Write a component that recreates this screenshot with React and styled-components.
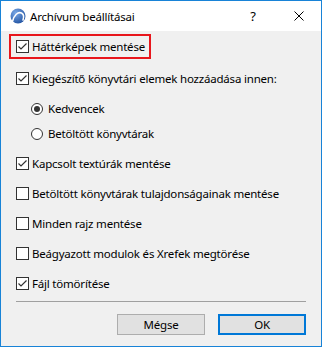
import styled, { createGlobalStyle } from "styled-components";

const Global = createGlobalStyle`
  html, body { margin: 0; padding: 0; background: #fff; }
  body {
    font-family: "Noto Sans", "Liberation Sans", sans-serif;
    font-size: 11.5px;
    letter-spacing: -0.2px;
    color: #000;
  }
`;

// dialog frame
const Window = styled.div`
  width: 322px;
  height: 347px;
  box-sizing: border-box;
  border: 1px solid #1883d7;
  background: #f0f0f0;
  display: flex;
  flex-direction: column;
`;

const TitleBar = styled.div`
  height: 30px;
  background: #fff;
  display: flex;
  align-items: center;
  padding-left: 9px;
`;

const Title = styled.span`
  margin-left: 4px;
  flex: 1;
  color: #000;
`;

const TitleButton = styled.div`
  width: ${(p) => p.w}px;
  height: 30px;
  display: flex;
  align-items: center;
  justify-content: center;
  font-size: 13px;
  color: #000;
`;

const Content = styled.div`
  flex: 1;
  display: flex;
  flex-direction: column;
  padding: 3px 15px 0 15px;
`;

const Highlight = styled.div`
  align-self: flex-start;
  margin-left: -7px;
  height: 25px;
  box-sizing: border-box;
  border: 2px solid #e8161c;
  padding: 0 4px 0 5px;
  display: flex;
  align-items: center;
  margin-bottom: 4px;
`;

const Row = styled.label`
  height: ${(p) => p.h || 30}px;
  display: flex;
  align-items: center;
  margin-left: ${(p) => p.indent || 0}px;
`;

const RadioGroup = styled.div`
  display: flex;
  flex-direction: column;
  padding: 3px 0 2px;
`;

const Box = styled.span`
  width: 13px;
  height: 13px;
  box-sizing: border-box;
  border: 1px solid #333;
  background: #fff;
  margin-right: 3px;
  display: flex;
  flex-shrink: 0;
`;

const Radio = styled.span`
  width: 12px;
  height: 12px;
  box-sizing: border-box;
  border: 1px solid #333;
  border-radius: 50%;
  background: #fff;
  margin-right: 5px;
  display: flex;
  align-items: center;
  justify-content: center;
  flex-shrink: 0;
  &::after {
    content: "";
    width: 6px;
    height: 6px;
    border-radius: 50%;
    background: ${(p) => (p.on ? "#333" : "transparent")};
  }
`;

const Separator = styled.div`
  height: 1px;
  background: #a0a0a0;
  margin: 3px 0 12px;
`;

const Buttons = styled.div`
  display: flex;
  justify-content: flex-end;
  gap: 13px;
`;

const Button = styled.div`
  width: 88px;
  height: 21px;
  box-sizing: border-box;
  border: ${(p) => (p.primary ? "2px solid #0078d7" : "1px solid #adadad")};
  background: #e1e1e1;
  display: flex;
  align-items: center;
  justify-content: center;
`;

const Logo = () => (
  <svg width="16" height="16" viewBox="0 0 16 16">
    <defs>
      <radialGradient id="lg" cx="0.35" cy="0.3" r="0.8">
        <stop offset="0" stopColor="#7aa8e6" />
        <stop offset="1" stopColor="#1d4f9e" />
      </radialGradient>
    </defs>
    <circle cx="8" cy="8" r="7.5" fill="url(#lg)" />
    <path d="M2.5 13.5 C4 7 8 3.5 11.5 5 C13.5 6 14 9 13 12" fill="none" stroke="#fff" strokeWidth="1.6" strokeLinecap="round" />
  </svg>
);

const Check = ({ on }) => (
  <Box>
    {on && (
      <svg width="11" height="11" viewBox="0 0 11 11">
        <path d="M1.5 5.5 L4 8 L9.5 2.5" fill="none" stroke="#333" strokeWidth="1.2" />
      </svg>
    )}
  </Box>
);

const Close = () => (
  <svg width="10" height="10" viewBox="0 0 10 10">
    <path d="M0.5 0.5 L9.5 9.5 M9.5 0.5 L0.5 9.5" stroke="#000" strokeWidth="1" />
  </svg>
);

const rows = [
  ["Kapcsolt textúrák mentése", true],
  ["Betöltött könyvtárak tulajdonságainak mentése", false],
  ["Minden rajz mentése", false],
  ["Beágyazott modulok és Xrefek megtörése", false],
  ["Fájl tömörítése", true],
];

const App = () => {
  return (
    <>
      <Global />
      <Window>
        <TitleBar>
          <Logo />
          <Title>Archívum beállításai</Title>
          <TitleButton w={46}>?</TitleButton>
          <TitleButton w={45}>
            <Close />
          </TitleButton>
        </TitleBar>
        <Content>
          <Highlight>
            <Check on />
            <span>Háttérképek mentése</span>
          </Highlight>
          <Row>
            <Check on />
            <span>Kiegészítő könyvtári elemek hozzáadása innen:</span>
          </Row>
          <RadioGroup>
            <Row h={25} indent={15}>
              <Radio on />
              <span>Kedvencek</span>
            </Row>
            <Row h={25} indent={15}>
              <Radio />
              <span>Betöltött könyvtárak</span>
            </Row>
          </RadioGroup>
          {rows.map(([label, on]) => (
            <Row key={label}>
              <Check on={on} />
              <span>{label}</span>
            </Row>
          ))}
          <Separator />
          <Buttons>
            <Button>Mégse</Button>
            <Button primary>OK</Button>
          </Buttons>
        </Content>
      </Window>
    </>
  );
};

export default App;
